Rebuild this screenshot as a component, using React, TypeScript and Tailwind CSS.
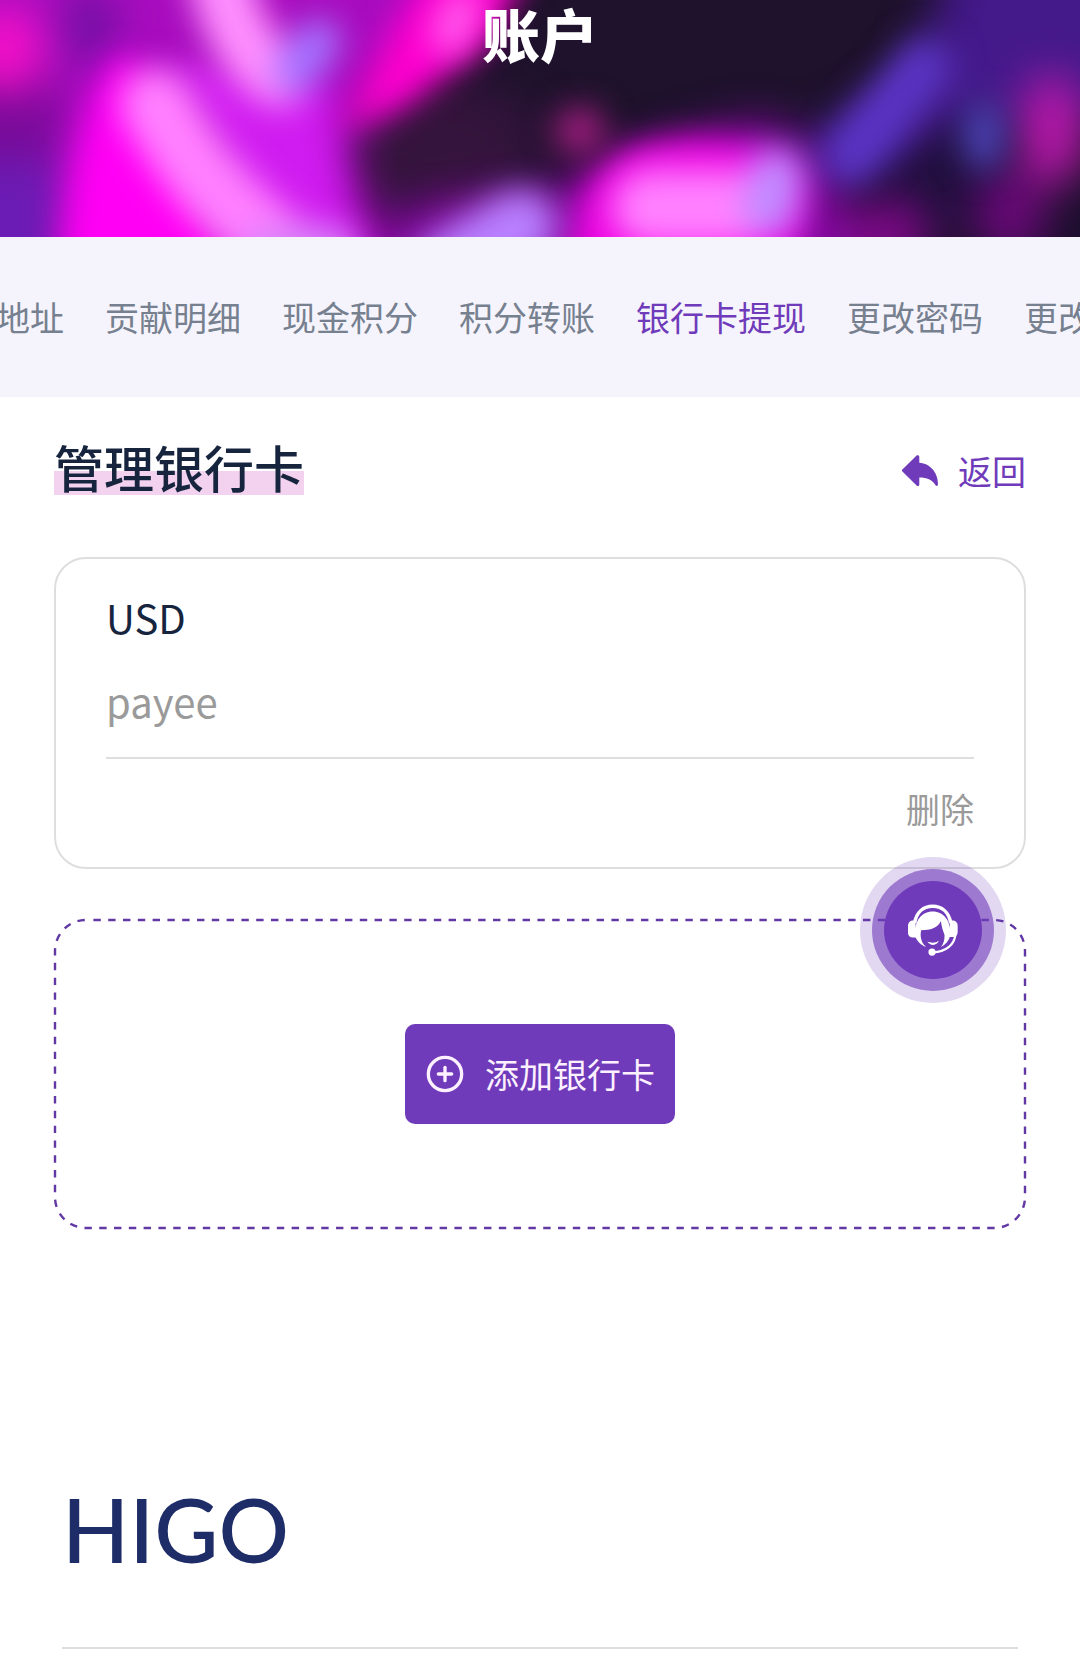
import { CirclePlus } from "lucide-react";

const TABS = [
  { label: "地址", active: false },
  { label: "贡献明细", active: false },
  { label: "现金积分", active: false },
  { label: "积分转账", active: false },
  { label: "银行卡提现", active: true },
  { label: "更改密码", active: false },
  { label: "更改", active: false },
];

function HeroBackdrop() {
  return (
    <svg
      className="absolute inset-0 h-full w-full"
      viewBox="0 0 1080 237"
      preserveAspectRatio="none"
      aria-hidden="true"
    >
      <defs>
        <filter id="glow" filterUnits="userSpaceOnUse" x="-100" y="-100" width="1280" height="440" colorInterpolationFilters="sRGB">
          <feGaussianBlur stdDeviation="16" />
        </filter>
        <filter id="haze" filterUnits="userSpaceOnUse" x="-100" y="-100" width="1280" height="440" colorInterpolationFilters="sRGB">
          <feGaussianBlur stdDeviation="22" />
        </filter>
      </defs>
      <rect width="1080" height="237" fill="#1e122c" />

      {/* Purple masses */}
      <g filter="url(#haze)">
        <ellipse cx="430" cy="140" rx="110" ry="60" fill="#34143c" />
        <path d="M-90 -90H500L450 30L400 80L350 140L364 190L430 330H-90Z" fill="#a80cbe" />
        <rect x="-90" y="80" width="150" height="90" fill="#780a98" />
        <rect x="-90" y="160" width="150" height="160" fill="#6a1cb4" />
        <ellipse cx="4" cy="50" rx="40" ry="44" fill="#f410c8" />
        <ellipse cx="90" cy="26" rx="26" ry="40" fill="#6c10a0" />
        <path d="M350 330L400 206L560 186L640 150L760 120L830 150L880 330Z" fill="#8408a0" />
        <path d="M970 -90H1180V110L1000 120L860 170L790 150L910 80Z" fill="#44198a" />
        <path d="M850 190L960 110L1010 200L900 260Z" fill="#200f3c" />
        <ellipse cx="1052" cy="130" rx="36" ry="56" fill="#b418a8" />
        <ellipse cx="1010" cy="215" rx="36" ry="46" fill="#680878" />
        <ellipse cx="890" cy="236" rx="40" ry="36" fill="#800888" />
        <ellipse cx="1090" cy="230" rx="24" ry="40" fill="#180c2c" />
      </g>

      {/* Magenta layer */}
      <g filter="url(#glow)">
        <path d="M124 50C84 90 60 180 60 330H240C220 200 180 120 124 50Z" fill="#ff00f4" />
        <path d="M160 70C230 60 300 70 330 90C330 160 344 200 380 330H250C250 220 220 140 160 70Z" fill="#d01cf0" />
        <path d="M540 -60L430 -30L392 30L340 130L404 106L492 40Z" fill="#ff00d0" />
        <path d="M630 150C700 130 780 140 800 190C806 230 790 280 760 300H580C560 240 580 170 630 150Z" fill="#f006e4" />
        <path d="M924 66L850 156" stroke="#5a34c4" strokeWidth="56" strokeLinecap="round" />
        <ellipse cx="984" cy="136" rx="22" ry="36" fill="#4840b0" />
      </g>

      {/* Highlights */}
      <g filter="url(#glow)" fill="none" strokeLinecap="round">
        <path d="M216 -40C228 26 252 62 280 76" stroke="#ff90ff" strokeWidth="62" />
        <path d="M318 42L296 70" stroke="#a474ff" strokeWidth="46" />
        <path d="M156 104C188 160 220 206 300 264" stroke="#ff80ff" strokeWidth="72" />
        <path d="M270 254H330" stroke="#d884f8" strokeWidth="56" />
        <path d="M450 268L520 226" stroke="#b880ff" strokeWidth="72" />
        <path d="M650 208H740" stroke="#ff80ff" strokeWidth="76" />
        <path d="M770 210L776 176" stroke="#c08cff" strokeWidth="54" />
        <path d="M462 8L450 36" stroke="#ff5cec" strokeWidth="38" />
      </g>
      <ellipse cx="580" cy="131" rx="26" ry="24" fill="#a01c80" filter="url(#glow)" />
    </svg>
  );
}

function BackIcon() {
  return (
    <svg className="h-8 w-9" viewBox="0 0 36 32" fill="currentColor" aria-hidden="true">
      <path d="M0.4 14.4L14.6 0.6C15.6 -0.3 17.3 0.3 17.3 1.8V7.8C28.6 8.4 36 18.2 36 29C36 31.4 34 31.6 33 29.6C30.2 24.8 25 22.6 17.3 22.6V29.4C17.3 31 15.6 31.5 14.6 30.5L0.4 16.6C-0.2 16 -0.2 15 0.4 14.4Z" />
    </svg>
  );
}

function SupportIcon() {
  return (
    <svg className="h-[52px] w-[52px]" viewBox="0 0 156 158" aria-hidden="true">
      {/* Headband and ear cups */}
      <path d="M22 58C28 24 50 7 77 7C104 7 126 24 132 58" fill="none" stroke="#fff" strokeWidth="11" />
      <path d="M24 50H14C6 52 2 58 2 66V88C2 96 8 102 16 102H28Z" fill="#fff" />
      <path d="M130 50H141C149 52 153 58 153 66V84C153 94 148 100 140 100H126Z" fill="#fff" />
      {/* Hair */}
      <path d="M24 98C20 50 44 23 77 23C110 23 134 50 130 98C126 112 116 124 102 131C110 120 114 108 113 94C108 80 104 70 102 52C92 74 70 80 42 80C38 98 42 118 57 131C40 124 28 112 24 98Z" fill="#fff" />
      <path d="M61 114C71 119 86 119 96 112C90 128 69 128 61 114Z" fill="#fff" />
      {/* Microphone */}
      <path d="M146 92C144 124 116 146 78 147" fill="none" stroke="#fff" strokeWidth="7" />
      <circle cx="75" cy="146" r="11" fill="#fff" />
    </svg>
  );
}

// CSS dashed borders give no control over the dash length
function DashedOutline() {
  return (
    <svg
      className="pointer-events-none absolute inset-px h-[calc(100%-2px)] w-[calc(100%-2px)] overflow-visible"
      aria-hidden="true"
    >
      <rect
        width="100%"
        height="100%"
        rx="31"
        fill="none"
        stroke="#6238a4"
        strokeWidth="2.4"
        strokeDasharray="7.4 7.4"
        strokeDashoffset="7.4"
      />
    </svg>
  );
}

export default function App() {
  return (
    <div className="min-h-screen overflow-x-hidden bg-white font-['Noto_Sans_CJK_SC',sans-serif] text-[34px] leading-[48px]">
      <header className="relative h-[237px] overflow-hidden">
        <HeroBackdrop />
        <h1 className="relative text-center text-[58px] leading-[66px] font-black text-white">账户</h1>
      </header>

      <nav className="overflow-hidden bg-[#f5f4fd] py-14">
        <ul className="-ml-1 flex gap-[41px] whitespace-nowrap">
          {TABS.map((tab) => (
            <li key={tab.label}>
              <a href="#" className={tab.active ? "text-[#6f3bba]" : "text-[#76808f]"}>
                {tab.label}
              </a>
            </li>
          ))}
        </ul>
      </nav>

      <main className="px-[54px] pt-11">
        <div className="flex items-end justify-between">
          <h2 className="bg-[linear-gradient(to_top,#f2d2ef_24px,transparent_24px)] pb-1 text-[50px] leading-[50px] font-medium text-[#16243e]">
            管理银行卡
          </h2>
          <a href="#" className="flex items-center gap-5 text-[#6f3bba]">
            <BackIcon />
            返回
          </a>
        </div>

        <section className="mt-[62px] rounded-[32px] border-2 border-[#dedede] px-[50px] py-[34px]">
          <p className="text-[40px] text-[#16243e]">USD</p>
          <p className="mt-9 border-b-2 border-[#dedede] pb-8 text-[40px] text-[#9a9a9a]">payee</p>
          <div className="mt-[26px] flex justify-end">
            <button type="button" className="text-[#9a9a9a]">
              删除
            </button>
          </div>
        </section>

        <section className="relative mt-[50px] flex items-center justify-center py-[105px]">
          <DashedOutline />
          <button
            type="button"
            className="flex h-[100px] items-center gap-5 rounded-[10px] bg-[#6f3bba] px-5 text-[#fdf0ff]"
          >
            <CirclePlus className="size-10" />
            添加银行卡
          </button>
        </section>
      </main>

      <footer className="mx-[62px] mt-[250px] border-b-2 border-[#dedede] pb-[68px]">
        <p className="font-['Lato',sans-serif] text-[88px] leading-[100px] font-medium text-[#1e2c68]">HIGO</p>
      </footer>

      {/* Floating support button */}
      <button
        type="button"
        aria-label="客服"
        className="fixed right-[74px] bottom-[40%] rounded-full bg-[#6f3bba]/20 p-3"
      >
        <span className="block rounded-full bg-[#6f3bba]/60 p-3">
          <span className="flex size-[98px] items-center justify-center rounded-full bg-[#6f3bba]">
            <SupportIcon />
          </span>
        </span>
      </button>
    </div>
  );
}
